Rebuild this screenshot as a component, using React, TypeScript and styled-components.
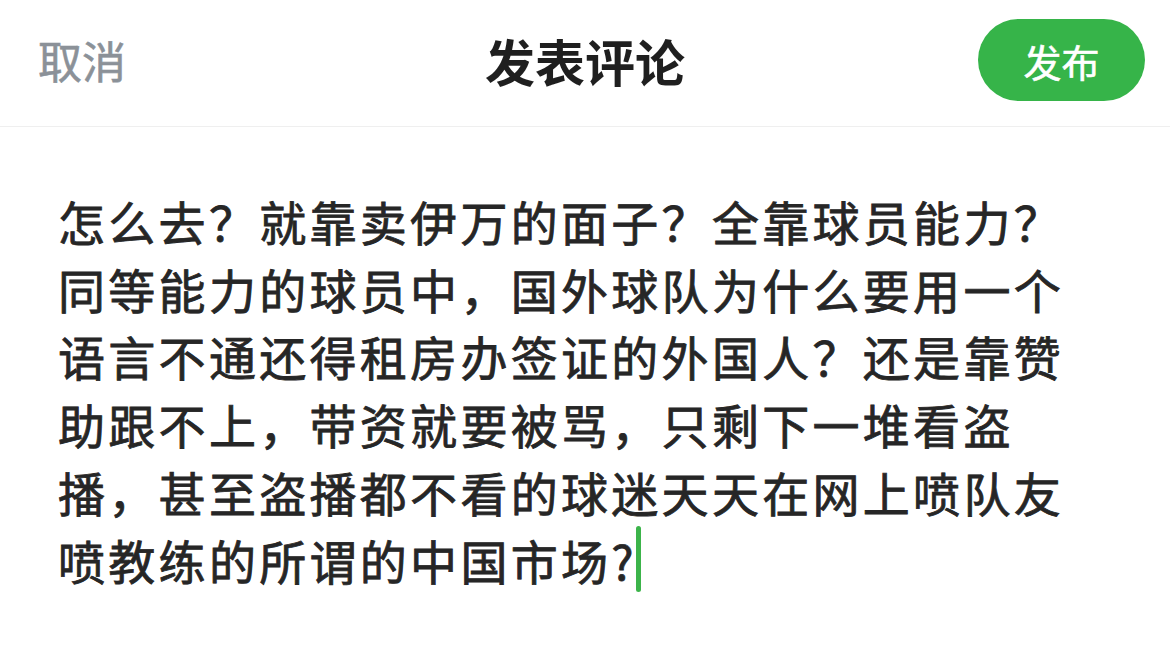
import React from 'react';
import styled, { createGlobalStyle } from 'styled-components';

const GlobalStyle = createGlobalStyle`
  html, body {
    margin: 0;
    padding: 0;
    background: #fff;
  }
  body {
    font-family: 'Noto Sans CJK SC', 'Noto Sans', sans-serif;
    -webkit-font-smoothing: antialiased;
  }
`;

const content =
  '怎么去？就靠卖伊万的面子？全靠球员能力？同等能力的球员中，国外球队为什么要用一个语言不通还得租房办签证的外国人？还是靠赞助跟不上，带资就要被骂，只剩下一堆看盗播，甚至盗播都不看的球迷天天在网上喷队友喷教练的所谓的中国市场?';

export default function App() {
  return (
    <S.Page>
      <GlobalStyle />
      <S.Header>
        <S.Cancel>取消</S.Cancel>
        <S.Title>发表评论</S.Title>
        <S.Publish>发布</S.Publish>
      </S.Header>
      <S.Editor>
        <S.Text>
          {content}
          <S.Caret />
        </S.Text>
      </S.Editor>
    </S.Page>
  );
}

const S = {
  Page: styled.div`
    width: 1170px;
    height: 658px;
    overflow: hidden;
    background: #fff;
  `,
  Header: styled.div`
    height: 127px;
    display: grid;
    grid-template-columns: 1fr auto 1fr;
    align-items: center;
    padding: 0 25px;
    border-bottom: 1px solid #efefef;
    box-sizing: border-box;
  `,
  Cancel: styled.div`
    justify-self: start;
    margin-left: 13px;
    font-size: 44px;
    color: #8b9198;
    -webkit-text-stroke: 0.6px #8b9198;
    margin-top: -6px;
  `,
  Title: styled.div`
    font-size: 50px;
    font-weight: 700;
    color: #1f1f1f;
    margin-top: -6px;
  `,
  Publish: styled.button`
    justify-self: end;
    width: 167px;
    height: 82px;
    border: none;
    border-radius: 41px;
    background: #36b449;
    color: #fff;
    font-family: inherit;
    font-size: 38px;
    -webkit-text-stroke: 0.6px #fff;
    margin-top: -6px;
    padding: 0;
  `,
  Editor: styled.div`
    padding: 60px 80px 0 58px;
  `,
  Text: styled.div`
    font-size: 47px;
    letter-spacing: 3.3px;
    line-height: 67.7px;
    color: #262626;
    -webkit-text-stroke: 0.8px #262626;
    word-break: break-all;
  `,
  Caret: styled.span`
    display: inline-block;
    width: 5px;
    height: 66px;
    border-radius: 3px;
    background: #3cb44a;
    vertical-align: -12px;
    margin-left: -1px;
  `,
};
